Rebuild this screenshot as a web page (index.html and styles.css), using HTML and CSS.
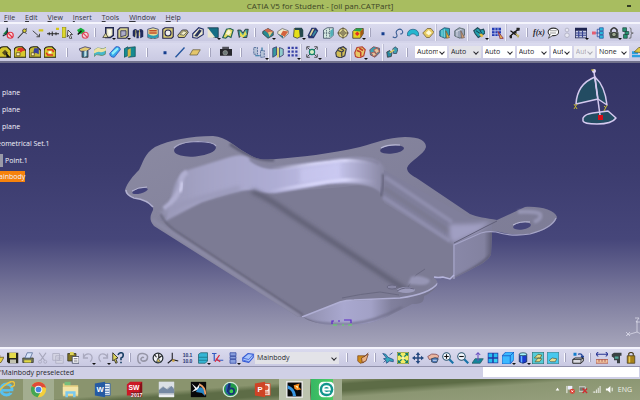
FILE: index.html
```html
<!DOCTYPE html>
<html lang="en">
<head>
<meta charset="utf-8">
<title>CATIA V5 for Student - [oil pan.CATPart]</title>
<link rel="stylesheet" href="styles.css">
</head>
<body>
<svg class="sprite" aria-hidden="true">
  <symbol id="axisno" viewBox="0 0 16 16"><path d="M1 10l6-7 2 6z" fill="#157a3c"/><path d="M7 1v8l-6 3" stroke="#123" fill="none" stroke-width="1.5"/><circle cx="11" cy="11" r="4" fill="#f6d5dc" stroke="#e23446" stroke-width="1.6"/><path d="M8 8l6 6" stroke="#e23446" stroke-width="1.6"/></symbol>
  <symbol id="ptline" viewBox="0 0 16 16"><path d="M1 15L13 2" stroke="#333" stroke-width="1.4"/><path d="M7 5l6 4" stroke="#333"/><circle cx="10" cy="5" r="2.4" fill="#d8ce32" stroke="#333"/></symbol>
  <symbol id="linept" viewBox="0 0 16 16"><path d="M1 5l9 8M6 13h4V9" stroke="#444" fill="none" stroke-width="1.3"/><path d="M9 3h6v3H9z" fill="#d2c51a"/></symbol>
  <symbol id="dist" viewBox="0 0 16 16"><path d="M0 9h16M3 7v4M7 6v6M12 7v4" stroke="#222" stroke-width="1.3"/><path d="M12 1h4v3h-4z" fill="#d2c51a"/></symbol>
  <symbol id="rulecur" viewBox="0 0 16 16"><path d="M0 0h5v14H0z" fill="#ded82c" stroke="#86801a"/><path d="M8 4l6 6H11l2 5-2 1-2-5-2 2z" fill="#eee" stroke="#222"/></symbol>
  <symbol id="greenno" viewBox="0 0 16 16"><path d="M0 4l5-3 5 3v5H3z" fill="#15ae38"/><path d="M1 10l5-5" stroke="#111" stroke-width="2"/><circle cx="11" cy="11" r="4" fill="#f6d5dc" stroke="#dc4c62" stroke-width="1.5"/><path d="M8 8l6 6" stroke="#dc4c62" stroke-width="1.5"/></symbol>
  <symbol id="pad" viewBox="0 0 16 16"><path d="M5 1h10v10l-4 3H5z" fill="#e9e6c6" stroke="#20264e" stroke-width="2"/><path d="M8 4h4v6l-3 2z" fill="#fbfaf0"/><path d="M1 14l4-6 3 6z" fill="#ded89a" stroke="#333"/></symbol>
  <symbol id="pocket" viewBox="0 0 16 16"><path d="M1 4l3-3h11v11l-3 3H1z" fill="#d6d08d" stroke="#25254d" stroke-width="1.5"/><path d="M5 5h7v6l-7 2z" fill="#adadc8" stroke="#25254d"/></symbol>
  <symbol id="shaft" viewBox="0 0 16 16"><path d="M1 5q3-5 7 0q4-5 7 0v8l-4 2V7H9v8H6V7L4 14 1 12z" fill="#222b5c"/><path d="M5 4v9M10 4v8" stroke="#d7c86a"/></symbol>
  <symbol id="groove" viewBox="0 0 16 16"><path d="M1 3q7-4 14 0v11q-7 4-14 0z" fill="#e8d994" stroke="#26376f"/><path d="M3 4h10v2H3zm0 3h10v2H3z" fill="#c34f28"/><path d="M1 9q8 5 14 0v4q-7 4-14 0z" fill="#2a9bb5"/></symbol>
  <symbol id="hole" viewBox="0 0 16 16"><path d="M1 3l3-2h11v12l-2 2H1z" fill="#d8cb74" stroke="#26264f" stroke-width="1.5"/><circle cx="8" cy="8" r="4" fill="#eee" stroke="#282850" stroke-width="1.5"/></symbol>
  <symbol id="rib" viewBox="0 0 16 16"><path d="M1 11L7 4h6l2 3-5 7H2z" fill="#d9cd77" stroke="#2b2b42" stroke-width="1.2"/><path d="M4 10l5-5 4 2-4 4z" fill="#f2edc5" stroke="#555"/></symbol>
  <symbol id="slot" viewBox="0 0 16 16"><path d="M1 9L9 1l6 2v7l-8 5-6-1z" fill="#eeebce" stroke="#222d68" stroke-width="1.5"/><path d="M3 12l7-9 3 2-6 8z" fill="#27345f"/></symbol>
  <symbol id="stiff" viewBox="0 0 16 16"><path d="M1 1h14v13H9z" fill="#156f85" stroke="#173348"/><path d="M1 1v13h10z" fill="#e9e7d0"/></symbol>
  <symbol id="loft" viewBox="0 0 16 16"><path d="M1 14l5-11 5-1 4 2-3 10-4-2-3 3z" fill="#e4da62" stroke="#1f5f51" stroke-width="1.5"/><path d="M5 9l4-6 3 4-3 4z" fill="#f7f5d0"/></symbol>
  <symbol id="loft2" viewBox="0 0 16 16"><path d="M1 4h4l3 4 3-5h4l-2 11H8l-2-4-3 4z" fill="#3f9a99" stroke="#222"/><path d="M4 6l4 5 3-6 2 5-5 4-4-2z" fill="#e6db53"/></symbol>
  <symbol id="fillet" viewBox="0 0 16 16"><path d="M1 6l7-4 7 4v5l-7 4-7-6z" fill="#278b91" stroke="#333"/><path d="M3 4l5-2 7 4-4 5z" fill="#c9674e"/><path d="M8 7l6-1-4 7z" fill="#dccb81"/></symbol>
  <symbol id="chamfer" viewBox="0 0 16 16"><path d="M1 6l6-4 8 3v4l-7 6-7-6z" fill="#efe9ca" stroke="#666"/><path d="M8 5l7 1-5 7-5-3z" fill="#d4623d"/><path d="M1 9l7 3v3z" fill="#2a6e88"/></symbol>
  <symbol id="draft" viewBox="0 0 16 16"><path d="M3 2h7l1 11-4 2-5-2z" fill="#e6df18" stroke="#333"/><path d="M4 1h9l2 3v9l-4 1-1-10H4z" fill="#24474d"/></symbol>
  <symbol id="shell" viewBox="0 0 16 16"><path d="M6 1h6l3 4-6 10H2l-1-4z" fill="#28356e"/><path d="M7 3l3-1-5 10-2-1z" fill="#e2d79b"/><path d="M11 4l2 2-5 7-1-2z" fill="#3b8da4"/></symbol>
  <symbol id="thick" viewBox="0 0 16 16"><path d="M2 4l5-3h8v10l-4 4H2z" fill="#d4e8e0" stroke="#345"/><path d="M6 4v10M10 2v12M2 8h13" stroke="#456" stroke-dasharray="2 1"/><path d="M11 5l4-3v9l-4 3z" fill="#52afb8"/></symbol>
  <symbol id="target" viewBox="0 0 16 16"><circle cx="8" cy="8" r="6" fill="#e5dc96" stroke="#6b6142" stroke-width="1.5"/><circle cx="8" cy="8" r="3" fill="none" stroke="#544d3a"/><path d="M8 0v16M0 8h16" stroke="#5b5340"/></symbol>
  <symbol id="cube3" viewBox="0 0 16 16"><path d="M1 6l4-4h10v7l-4 6H1z" fill="#e4cf21" stroke="#333"/><path d="M2 5l4-3h8l-3 4z" fill="#22a650"/><path d="M11 6l4-4v7l-4 5z" fill="#a35913"/><path d="M4 9l3-3 3 3-3 3z" fill="#e12f24"/></symbol>
  <symbol id="dot" viewBox="0 0 16 16"><path d="M6 7h4v4H6z" fill="#153e8e"/></symbol>
  <symbol id="spline" viewBox="0 0 16 16"><path d="M1 13c4 3 7 0 5-4s4-8 7-5 0 6-2 5" stroke="#355a91" fill="none" stroke-width="1.4"/></symbol>
  <symbol id="arc" viewBox="0 0 16 16"><path d="M0 11Q1 3 8 3t8 8l-3 1q-5-6-10 0z" fill="#26b6cf" stroke="#266487"/></symbol>
  <symbol id="offset" viewBox="0 0 16 16"><path d="M1 8l6-6h5l4 5-6 7H6z" fill="#e6ca62" stroke="#6d5c34"/><path d="M5 8l4-4 4 4-4 3z" fill="#fffad5"/></symbol>
  <symbol id="split" viewBox="0 0 16 16"><path d="M1 5l6-4 7 1v9l-6 4-7-3z" fill="#2aa8ba" stroke="#246"/><path d="M4 4v9M7 3v11" stroke="#b9edf0"/><path d="M9 5l5 9-4 1z" fill="#e3b944" stroke="#7a5c3a"/></symbol>
  <symbol id="trim" viewBox="0 0 16 16"><path d="M1 5l6-4 7 2v8l-6 4-7-3z" fill="#9aa5b8" stroke="#455"/><path d="M4 5v8M3 6l7-3" stroke="#e4e8f1"/><path d="M9 5l5 9-4 1z" fill="#cc9c73" stroke="#756058"/></symbol>
  <symbol id="xform" viewBox="0 0 16 16"><path d="M1 5l5-4 4 3 4-1 2 5-4 3-5 3-4-5z" fill="#239ead" stroke="#204a57" stroke-width="1.5"/><path d="M4 5l6 4M9 4l3 5" stroke="#123"/><path d="M8 9l3 5 3-2-2-3z" fill="#e6ba42"/></symbol>
  <symbol id="gridcur" viewBox="0 0 16 16"><path d="M0 1h12v11H0z" fill="#253cb4"/><path d="M0 5h12M0 9h12M4 1v11M8 1v11" stroke="#cad0ef"/><path d="M8 6l7 9-4 1z" fill="#e7b34c" stroke="#824"/></symbol>
  <symbol id="axes" viewBox="0 0 16 16"><path d="M1 13l6-6 7-5M2 5l11 8" stroke="#111" stroke-width="1.500"/><path d="M6 6h4v4H6zM10 1h4v4h-4zM1 11h3v4H1z" fill="#222"/><path d="M8 8l4 7 2-4z" fill="#c9b96d"/></symbol>
  <symbol id="bubble" viewBox="0 0 16 16"><ellipse cx="8.500" cy="6.500" rx="7" ry="5" fill="#fff" stroke="#333" stroke-width="1.4"/><path d="M4 10l-2 5 6-4" fill="#fff" stroke="#333"/><path d="M4 5h9M4 8h8" stroke="#777"/></symbol>
  <symbol id="ghost" viewBox="0 0 16 16"><circle cx="8" cy="4" r="2.500" fill="#e7e7f2" stroke="#aaaabe"/><circle cx="8" cy="11" r="3" fill="#e7e7f2" stroke="#aaaabe"/></symbol>
  <symbol id="table" viewBox="0 0 16 16"><path d="M0 1h16v14H0z" fill="#1e2450"/><path d="M1 5h14v9H1z" fill="#c9cde2"/><path d="M1 8h14M1 11h14M5 5v9M10 5v9" stroke="#34408f" stroke-width="1.500"/></symbol>
  <symbol id="tree" viewBox="0 0 16 16"><path d="M2 8h5M7 3v10M7 3h4M7 8h4M7 13h4" stroke="#27459b" fill="none"/><path d="M0 6h5v4H0z" fill="#e65d70"/><path d="M10 1h5v4h-5zM10 6h5v4h-5zM10 11h5v4h-5z" fill="#29b9dc" stroke="#2859a0"/></symbol>
  <symbol id="lock" viewBox="0 0 16 16"><path d="M4 7V4q4-6 8 0v3" stroke="#333" fill="none" stroke-width="2"/><path d="M1 7h13v8H3z" fill="#465047"/><circle cx="8" cy="10" r="3" fill="#98a58b" stroke="#222"/></symbol>
  <symbol id="rules" viewBox="0 0 16 16"><path d="M1 1h5v5H1zM4 6h5v4H4zM2 10h5v5H2z" fill="#249270" stroke="#244b44"/><path d="M10 1q3 0 2 4t3 3q-4 0-3 4t-3 3" stroke="#555" fill="none"/></symbol>
  <symbol id="gold" viewBox="0 0 16 16"><path d="M0 15V6q1-5 6-5h5l5 5v9z" fill="#d4c62e" stroke="#201f12" stroke-width="1.600"/><path d="M4 9l4-4 4 4-4 4z" fill="#574d1d"/><path d="M9 8l6 7h-5z" fill="#111"/></symbol>
  <symbol id="goldr" viewBox="0 0 16 16"><path d="M0 15V6q1-5 6-5h5l5 5v9z" fill="#d7c82e" stroke="#201f12" stroke-width="1.600"/><path d="M5 3l6-1 4 4-4 1-2 2-2-3-3 1z" fill="#df3427"/><path d="M3 9h5v4H3z" fill="#fff0b7" stroke="#554c1b"/></symbol>
  <symbol id="goldb" viewBox="0 0 16 16"><path d="M0 15V6q1-5 6-5h5l5 5v9z" fill="#c5b936" stroke="#201f12" stroke-width="1.600"/><path d="M7 3h6v8l-4-2-4 3z" fill="#373f9b"/><path d="M3 9h4v4H3z" fill="#fff0b7" stroke="#554c1b"/></symbol>
  <symbol id="goldx" viewBox="0 0 16 16"><path d="M0 15V6q1-5 6-5h5l5 5v9z" fill="#d7c82e" stroke="#201f12" stroke-width="1.600"/><path d="M4 5h7l2 3M12 12H5l-2-3" stroke="#df3427" stroke-width="2" fill="none"/><path d="M6 7h4v3H6z" fill="#fff"/></symbol>
  <symbol id="extr" viewBox="0 0 16 16"><path d="M4 6h8v9H4z" fill="#3a7190" stroke="#333"/><path d="M0 4l8-3 8 2-6 4H2z" fill="#e5cc71" stroke="#336"/><path d="M7 7l3-1v7l-3 2z" fill="#c3e3e7"/></symbol>
  <symbol id="surf" viewBox="0 0 16 16"><path d="M0 6q4-5 8-3t8-1l-1 9q-4 3-8 1t-7 2z" fill="#47b8cb" stroke="#63835b"/><path d="M0 6q4-5 8-3t8-1v4q-5 3-8 2t-8 2z" fill="#eee2a1"/></symbol>
  <symbol id="sweep" viewBox="0 0 16 16"><path d="M1 10L9 1q6-1 6 4l-8 10q-6 0-6-5z" fill="#36a8ea" stroke="#2145ba"/><path d="M3 9l8-7 2 2-8 8z" fill="#8ff0fa"/></symbol>
  <symbol id="close" viewBox="0 0 16 16"><path d="M0 4l5-3v12l-5 2zM6 2l9-1v13l-9 1z" fill="#168b91" stroke="#174f57"/><path d="M5 5l4-2v10l-4 2z" fill="#d3b849"/></symbol>
  <symbol id="line" viewBox="0 0 16 16"><path d="M2 15L14 2" stroke="#23559d" stroke-width="1.800"/></symbol>
  <symbol id="plane" viewBox="0 0 16 16"><path d="M5 5h10l-4 7H1z" fill="#e4c66a" stroke="#675d42"/></symbol>
  <symbol id="cam" viewBox="0 0 16 16"><path d="M0 4h16v9H0z" fill="#26272c"/><path d="M3 1h9v3H3z" fill="#515159"/><circle cx="7" cy="9" r="3" fill="#6d7a78" stroke="#999"/></symbol>
  <symbol id="transl" viewBox="0 0 16 16"><path d="M1 2h5v9H1zM10 6h5v9h-5z" fill="#b7c4d8" stroke="#405c8d" stroke-dasharray="3 1"/><path d="M3 13h6M12 2v4" stroke="#236f9d" stroke-width="1.500"/></symbol>
  <symbol id="mirror" viewBox="0 0 16 16"><path d="M1 3l5-2v11l-5 3z" fill="#3897a1" stroke="#336"/><path d="M7 2l2 1v11l-2 2z" fill="#e6d54b"/><path d="M10 2l5 2v8l-5 3z" fill="#8fcbcb" stroke="#336"/></symbol>
  <symbol id="dots" viewBox="0 0 16 16"><path d="M1 1h3v3H1zM6 1h3v3H6zM11 1h3v3h-3zM1 6h3v3H1zM6 6h3v3H6zM11 6h3v3h-3zM1 11h3v3H1zM6 11h3v3H6zM11 11h3v3h-3z" fill="#3740a6"/></symbol>
  <symbol id="scale" viewBox="0 0 16 16"><path d="M2 2l12 12M14 2L2 14" stroke="#222"/><path d="M1 5V1h4M11 1h4v4M15 11v4h-4M5 15H1v-4" stroke="#222" fill="none"/><circle cx="8" cy="8" r="3.500" fill="#d5edc4" stroke="#138268" stroke-width="1.500"/></symbol>
  <symbol id="boxes" viewBox="0 0 16 16"><path d="M1 9l4-6 6-2 4 3-2 9-6 3-5-2z" fill="#d1bd55" stroke="#34384b" stroke-width="1.500"/><path d="M4 6l5 2M9 8v6M7 3l5 3M12 6l-3 2" stroke="#34384b" stroke-width="1.500"/></symbol>
  <symbol id="boxesr" viewBox="0 0 16 16"><path d="M1 9l3-7 7-1 4 4-2 8-6 3-5-2z" fill="#e8c766" stroke="#b43d30" stroke-width="1.500"/><path d="M4 6l5 2M9 8v6M7 3l5 3" stroke="#c23b2d" stroke-width="2"/></symbol>
  <symbol id="boxesc" viewBox="0 0 16 16"><path d="M1 5l5-4 8 2v6l-6 6-6-3z" fill="#37a3b7" stroke="#873b42"/><path d="M6 5l5-2 3 4-4 3zM3 9l3 5 4-2-3-4z" fill="#e1c3a0" stroke="#b6463e"/></symbol>
  <symbol id="assem" viewBox="0 0 16 16"><path d="M1 8l4-2 3 3-1 5-5 1z" fill="#2889a3" stroke="#333"/><path d="M9 4l3-3 4 3-2 6h-4z" fill="#3e9fb5" stroke="#345"/><path d="M5 9l6-4" stroke="#e4cd58" stroke-width="2"/></symbol>
  <symbol id="paint" viewBox="0 0 16 16"><path d="M0 7h8v4H0zM0 12h16v3H0z" fill="#2aa0e0"/><path d="M3 8l6-6h7v7z" fill="#e0c843" stroke="#645824"/></symbol>
  <symbol id="save" viewBox="0 0 16 16"><path d="M0 1h15v14H2l-2-2z" fill="#25251a"/><path d="M3 1h9v7H3z" fill="#e4db4b"/><path d="M4 10h8v5H4z" fill="#c2c2b0"/></symbol>
  <symbol id="open" viewBox="0 0 16 16"><path d="M1 4h10v9H1z" fill="#947e27"/><path d="M4 7h12l-4 7H1z" fill="#e7cf45" stroke="#625423"/></symbol>
  <symbol id="print" viewBox="0 0 16 16"><path d="M1 8h14v6H1z" fill="#777957" stroke="#33362b"/><path d="M4 8l3-7h7l-3 7z" fill="#d9e5fb" stroke="#4d6592"/><path d="M3 11h9v3H3z" fill="#e1d943"/></symbol>
  <symbol id="cut" viewBox="0 0 16 16"><path d="M3 1l7 10M12 1L5 11" stroke="#a7a7bb" stroke-width="1.600"/><circle cx="4" cy="13" r="2" fill="none" stroke="#a7a7bb"/><circle cx="11" cy="13" r="2" fill="none" stroke="#a7a7bb"/></symbol>
  <symbol id="copy" viewBox="0 0 16 16"><path d="M1 2h9v9H1zM5 5h10v10H5z" fill="#d4d4e3" stroke="#aaaabd"/><path d="M7 8h6M7 11h6" stroke="#aaaabd"/></symbol>
  <symbol id="paste" viewBox="0 0 16 16"><path d="M1 2h11v10H1z" fill="#807426" stroke="#343321"/><path d="M4 0h5v4H4z" fill="#ded55a"/><path d="M7 6h9v9H7z" fill="#fff" stroke="#343b55"/><path d="M9 9h5M9 12h5" stroke="#445"/></symbol>
  <symbol id="undo" viewBox="0 0 16 16"><path d="M2 7q3-6 9-4 5 4 0 10M2 2v6h6" stroke="#a9a9be" fill="none" stroke-width="1.700"/></symbol>
  <symbol id="redo" viewBox="0 0 16 16"><path d="M14 7q-3-6-9-4-5 4 0 10M14 2v6H8" stroke="#a9a9be" fill="none" stroke-width="1.700"/></symbol>
  <symbol id="help" viewBox="0 0 16 16"><path d="M1 1l7 7-3 1 2 5-2 1-2-5-2 2z" fill="#ded55e" stroke="#111"/><path d="M8 4q1-3 4-3t3 3-3 4v3M12 13v2" stroke="#1d4267" fill="none" stroke-width="2.200"/></symbol>
  <symbol id="update" viewBox="0 0 16 16"><path d="M9 8q-1-2-3 0t1 4q6 1 7-4t-6-6-7 6 4 7" stroke="#9696a7" fill="none" stroke-width="2"/></symbol>
  <symbol id="clock" viewBox="0 0 16 16"><circle cx="8" cy="8" r="6.500" fill="#f1f1f4" stroke="#222a30" stroke-width="1.600"/><path d="M3 3l3 4M9 2v6l4-3" stroke="#222" fill="none" stroke-width="1.500"/><path d="M8 8l4 6-6-1z" fill="#e2c65a" stroke="#345"/></symbol>
  <symbol id="axis3" viewBox="0 0 16 16"><path d="M7 1v9l8 2M7 10l-6 5" stroke="#1b1b20" fill="none" stroke-width="1.400"/><path d="M7 10h3v3H7z" fill="#d2a43a"/></symbol>
  <symbol id="slab" viewBox="0 0 16 16"><path d="M2 3l3-2h9v11l-3 3H2z" fill="#34b5d5" stroke="#24606b"/><path d="M2 7h12M2 11h12" stroke="#177080"/></symbol>
  <symbol id="link" viewBox="0 0 16 16"><path d="M0 2h6M3 2v10M6 11h9" stroke="#345ac0" stroke-width="1.600"/><path d="M4 13l6-9M5 9l6 4" stroke="#dc273d" stroke-width="1.700"/></symbol>
  <symbol id="stack" viewBox="0 0 16 16"><path d="M4 1h8v4H4zM4 6h8v3H4zM4 10h8v5H4z" fill="#8aa0df" stroke="#3048a0"/></symbol>
  <symbol id="body" viewBox="0 0 16 16"><path d="M1 8l7-6 7 1v4l-6 7-8-2z" fill="#a8c4fa" stroke="#3157d3" stroke-width="1.400"/><path d="M1 8l8 2 6-7M2 11l7 2" stroke="#3157d3" fill="none"/></symbol>
  <symbol id="hand" viewBox="0 0 16 16"><path d="M1 5h9l-1 9-5 1-3-3z" fill="#cf8b17" stroke="#7e4a20"/><path d="M15 1L9 7M6 8l5-3 4-2-3 9-5 2z" stroke="#733c1f" fill="#e9b184"/></symbol>
  <symbol id="fly" viewBox="0 0 16 16"><path d="M1 2l4 1 3 4 7 3v3l-5-1-4 3-1-4-3-2 4-1z" fill="#33aabd" stroke="#264a86"/><path d="M10 4l4-3M2 14l3-3" stroke="#264a86"/></symbol>
  <symbol id="fit" viewBox="0 0 16 16"><path d="M0 0h16v16H0z" fill="#f4ed63" stroke="#28484a"/><path d="M2 2l12 12M14 2L2 14M2 5V2h3M11 2h3v3M14 11v3h-3M5 14H2v-3" stroke="#137e6a" fill="none" stroke-width="1.500"/><path d="M6 6h4v4H6z" fill="#f9f4a5"/></symbol>
  <symbol id="pan" viewBox="0 0 16 16"><path d="M8 0l3 4H9v3h3V5l4 3-4 3V9H9v3h2l-3 4-3-4h2V9H4v2L0 8l4-3v2h3V4H5z" fill="#24477d"/></symbol>
  <symbol id="rotate" viewBox="0 0 16 16"><path d="M1 6q5-5 11-3t2 5l-6 1-5 1z" fill="#eab6a0" stroke="#7d444c"/><path d="M6 9q5-3 9 0l-2 5q-4 1-7-1z" fill="#4c78b8" stroke="#345"/><path d="M8 11h5" stroke="#fff"/></symbol>
  <symbol id="zin" viewBox="0 0 16 16"><path d="M9 9l6 6" stroke="#1873a8" stroke-width="3"/><circle cx="6" cy="6" r="5" fill="#f5f9ff" stroke="#27526d" stroke-width="1.400"/><path d="M3 6h6M6 3v6" stroke="#111" stroke-width="1.500"/></symbol>
  <symbol id="zout" viewBox="0 0 16 16"><path d="M9 9l6 6" stroke="#1873a8" stroke-width="3"/><circle cx="6" cy="6" r="5" fill="#f5f9ff" stroke="#27526d" stroke-width="1.400"/><path d="M3 6h6" stroke="#111" stroke-width="1.500"/></symbol>
  <symbol id="normal" viewBox="0 0 16 16"><path d="M4 9h11l-4 6H0z" fill="#14859b" stroke="#245d65"/><path d="M8 12V1M5 4l3-3 3 3" stroke="#6a50c0" fill="none" stroke-width="1.400"/></symbol>
  <symbol id="multi" viewBox="0 0 16 16"><path d="M1 1h14v14H1z" fill="#2337a5"/><path d="M2 2h5v5H2zM9 2h5v5H9zM2 9h5v5H2z" fill="#27bdef"/><path d="M9 9h5v5H9z" fill="#37d1f2"/></symbol>
  <symbol id="iso" viewBox="0 0 16 16"><path d="M0 5l5-5h11v10l-5 6H0z" fill="#3cb9ff" stroke="#164dbc"/><path d="M0 5h11v10M11 5l5-5" stroke="#164dbc" fill="none"/></symbol>
  <symbol id="cyl" viewBox="0 0 16 16"><path d="M3 3v10q5 4 10 0V3z" fill="#1b3bd0" stroke="#132c50"/><path d="M5 5h2v9H5z" fill="#67b7ff"/><ellipse cx="8" cy="3" rx="5" ry="2" fill="#a6f0f9" stroke="#1c4655"/></symbol>
  <symbol id="hide" viewBox="0 0 16 16"><path d="M0 0h16v16H0z" fill="#55cbd7" stroke="#35686c" stroke-width="1.500"/><path d="M3 8l5-5 5 1-2 4zM4 13l4-5 5 1-3 4z" fill="#e4dc86" stroke="#59603c"/></symbol>
  <symbol id="swap" viewBox="0 0 16 16"><path d="M0 0h16v16H0z" fill="#48c8ed" stroke="#4f7980" stroke-width="1.500"/><path d="M3 11l4-3 6 1-2 4H5z" fill="#e8dc8f" stroke="#4d6158"/></symbol>
  <symbol id="tool" viewBox="0 0 16 16"><path d="M2 1h4v4H2z" fill="#137ccc"/><path d="M8 3q6-2 6 4M12 5l2 3 2-3" stroke="#183e95" fill="none" stroke-width="1.400"/><path d="M1 10l3-2h11v4l-3 3H1z" fill="#dadae0" stroke="#222" stroke-width="1.300"/><path d="M1 10h11l3-2M12 10v5" stroke="#222" fill="none"/></symbol>
  <symbol id="measure" viewBox="0 0 16 16"><path d="M0 3h16M3 0L0 3l3 3M13 0l3 3-3 3" stroke="#293594" fill="none" stroke-width="1.400"/><path d="M0 10h16v5H0z" fill="#efc4a0" stroke="#ac5447"/><path d="M4 10v3M8 10v3M12 10v3" stroke="#933"/></symbol>
  <symbol id="caliper" viewBox="0 0 16 16"><path d="M1 3l3-2h10v4h-2v10H8v-4H4V8L1 6z" fill="#3a4143"/><path d="M5 6h5v3H5z" fill="#4fa698"/></symbol>
  <symbol id="weight" viewBox="0 0 16 16"><path d="M3 5h10v10H3z" fill="#a9831a" stroke="#493e1d"/><path d="M5 5V2q3-3 6 0v3" stroke="#493e1d" fill="none" stroke-width="1.500"/><path d="M5 6h2v8H5z" fill="#e4ca54"/></symbol>
</svg>

<header class="titlebar">
  <h1 class="title">CATIA V5 for Student - [oil pan.CATPart]</h1>
  <button class="minimize" aria-label="Minimize"></button>
</header>

<nav class="menubar">
  <a href="#"><u>F</u>ile</a><a href="#"><u>E</u>dit</a><a href="#"><u>V</u>iew</a><a href="#"><u>I</u>nsert</a><a href="#"><u>T</u>ools</a><a href="#"><u>W</u>indow</a><a href="#"><u>H</u>elp</a>
</nav>

<div class="toolbars">
  <div class="bar">
    <button aria-label="Axis off"><svg><use href="#axisno"/></svg></button>
    <button aria-label="Point on line"><svg><use href="#ptline"/></svg></button>
    <button aria-label="Line to point"><svg><use href="#linept"/></svg></button>
    <button aria-label="Distance"><svg><use href="#dist"/></svg></button>
    <button aria-label="Select ruler"><svg><use href="#rulecur"/></svg></button>
    <button aria-label="Solid off"><svg><use href="#greenno"/></svg></button>
    <i class="sep"></i>
    <button class="drop" aria-label="Pad"><svg><use href="#pad"/></svg></button>
    <button class="drop" aria-label="Pocket"><svg><use href="#pocket"/></svg></button>
    <button aria-label="Shaft"><svg><use href="#shaft"/></svg></button>
    <button aria-label="Groove"><svg><use href="#groove"/></svg></button>
    <button aria-label="Hole"><svg><use href="#hole"/></svg></button>
    <button aria-label="Rib"><svg><use href="#rib"/></svg></button>
    <button aria-label="Slot"><svg><use href="#slot"/></svg></button>
    <button class="drop" aria-label="Stiffener"><svg><use href="#stiff"/></svg></button>
    <button aria-label="Loft"><svg><use href="#loft"/></svg></button>
    <button aria-label="Removed loft"><svg><use href="#loft2"/></svg></button>
    <i class="sep"></i>
    <button class="drop" aria-label="Fillet"><svg><use href="#fillet"/></svg></button>
    <button aria-label="Chamfer"><svg><use href="#chamfer"/></svg></button>
    <button class="drop" aria-label="Draft"><svg><use href="#draft"/></svg></button>
    <button aria-label="Shell"><svg><use href="#shell"/></svg></button>
    <button aria-label="Thickness"><svg><use href="#thick"/></svg></button>
    <button aria-label="Thread"><svg><use href="#target"/></svg></button>
    <button class="drop" aria-label="Remove face"><svg><use href="#cube3"/></svg></button>
    <i class="sep"></i>
    <button aria-label="Point"><svg><use href="#dot"/></svg></button>
    <button aria-label="Spline"><svg><use href="#spline"/></svg></button>
    <button aria-label="Arc"><svg><use href="#arc"/></svg></button>
    <button aria-label="Offset"><svg><use href="#offset"/></svg></button>
    <i class="rule"></i>
    <button aria-label="Split"><svg><use href="#split"/></svg></button>
    <button aria-label="Trim"><svg><use href="#trim"/></svg></button>
    <i class="rule"></i>
    <button class="drop wide" aria-label="Transform"><svg><use href="#xform"/></svg></button>
    <i class="rule"></i>
    <button aria-label="Work on support"><svg><use href="#gridcur"/></svg></button>
    <i class="rule"></i>
    <button aria-label="Axis system"><svg><use href="#axes"/></svg></button>
    <i class="sep"></i>
    <button class="tight formula">f(x)</button>
    <button class="tight" aria-label="Comment"><svg><use href="#bubble"/></svg></button>
    <button class="tight" aria-label="Link" disabled><svg><use href="#ghost"/></svg></button>
    <button class="tight drop" aria-label="Design table"><svg><use href="#table"/></svg></button>
    <button class="wide" aria-label="Relations"><svg><use href="#tree"/></svg></button>
    <button class="tight drop" aria-label="Lock"><svg><use href="#lock"/></svg></button>
    <button class="tight" aria-label="Rules"><svg><use href="#rules"/></svg></button>
  </div>
  <div class="bar second">
    <button aria-label="Part"><svg><use href="#gold"/></svg></button>
    <button aria-label="Part update"><svg><use href="#goldr"/></svg></button>
    <button aria-label="Part select"><svg><use href="#goldb"/></svg></button>
    <button aria-label="Part exchange"><svg><use href="#goldx"/></svg></button>
    <i class="sep lg"></i>
    <button aria-label="Extrude"><svg><use href="#extr"/></svg></button>
    <button aria-label="Surface"><svg><use href="#surf"/></svg></button>
    <button aria-label="Sweep"><svg><use href="#sweep"/></svg></button>
    <button aria-label="Close surface"><svg><use href="#close"/></svg></button>
    <i class="sep lg"></i>
    <button aria-label="Point"><svg><use href="#dot"/></svg></button>
    <button aria-label="Line"><svg><use href="#line"/></svg></button>
    <button aria-label="Plane"><svg><use href="#plane"/></svg></button>
    <i class="sep md"></i>
    <button aria-label="Capture"><svg><use href="#cam"/></svg></button>
    <i class="sep md"></i>
    <button class="drop wide" aria-label="Translate"><svg><use href="#transl"/></svg></button>
    <i class="rule"></i>
    <button aria-label="Mirror"><svg><use href="#mirror"/></svg></button>
    <button class="drop" aria-label="Pattern"><svg><use href="#dots"/></svg></button>
    <i class="rule"></i>
    <button class="drop wide" aria-label="Scale"><svg><use href="#scale"/></svg></button>
    <i class="sep"></i>
    <button class="wide" aria-label="Assemble"><svg><use href="#boxes"/></svg></button>
    <i class="rule"></i>
    <button class="drop" aria-label="Add body"><svg><use href="#boxesr"/></svg></button>
    <button aria-label="Union trim"><svg><use href="#boxesc"/></svg></button>
    <i class="rule"></i>
    <button aria-label="Insert body"><svg><use href="#assem"/></svg></button>
    <i class="sep md"></i>
    <div class="props">
      <label class="pick"><select aria-label="Fill color"><option>Automatic</option></select></label>
      <label class="pick grey"><select aria-label="Opacity"><option>Auto</option></select></label>
      <label class="pick"><select aria-label="Line weight"><option>Auto</option></select></label>
      <label class="pick"><select aria-label="Line type"><option>Auto</option></select></label>
      <label class="pick short"><select aria-label="Point symbol"><option>Auto</option></select></label>
      <label class="pick short off"><select aria-label="Render style" disabled><option>Auto</option></select></label>
      <label class="pick"><select aria-label="Layer"><option>None</option></select></label>
      <button aria-label="Painter"><svg><use href="#paint"/></svg></button>
    </div>
  </div>
</div>

<main class="viewport">
  <svg class="scene" viewBox="0 63 640 284" preserveAspectRatio="xMidYMid slice" role="img" aria-label="Oil pan model">
    <defs>
      <linearGradient id="wall" gradientUnits="userSpaceOnUse" x1="165" y1="0" x2="386" y2="0"><stop offset="0" stop-color="#9a99b8"/><stop offset=".2" stop-color="#a5a4c6"/><stop offset=".5" stop-color="#aeadd4"/><stop offset=".78" stop-color="#c6c5ed"/><stop offset=".88" stop-color="#a9a8cb"/><stop offset="1" stop-color="#85849f"/></linearGradient>
      <linearGradient id="shine" gradientUnits="userSpaceOnUse" x1="270" y1="0" x2="378" y2="0"><stop offset="0" stop-color="#e2e1ff" stop-opacity="0"/><stop offset=".4" stop-color="#dddcfc"/><stop offset=".7" stop-color="#dddcfc"/><stop offset="1" stop-color="#a09fc0" stop-opacity="0"/></linearGradient>
      <linearGradient id="cyl1" x1="0" y1="0" x2="1" y2="0"><stop offset="0" stop-color="#8f8eac"/><stop offset=".3" stop-color="#a9a8cf"/><stop offset=".5" stop-color="#a2a1c6"/><stop offset=".65" stop-color="#81809d"/><stop offset="1" stop-color="#6d6c85"/></linearGradient>
      <linearGradient id="flange" x1="0" y1="0" x2="1" y2="1"><stop offset="0" stop-color="#8b8aa2"/><stop offset=".5" stop-color="#807f99"/><stop offset="1" stop-color="#7c7b94"/></linearGradient>
      <linearGradient id="box" x1="0" y1="0" x2="1" y2="0"><stop offset="0" stop-color="#8988a8"/><stop offset=".8" stop-color="#8382a0"/><stop offset="1" stop-color="#5e5d76"/></linearGradient>
      <filter id="s1" x="-20%" y="-50%" width="140%" height="200%"><feGaussianBlur stdDeviation="1"/></filter>
      <filter id="s2" x="-20%" y="-50%" width="140%" height="200%"><feGaussianBlur stdDeviation="2"/></filter>
      <clipPath id="part"><path id="outline" d="M125 190C127 183 133 176 139 170C143 163 144 154 155 147C170 140 190 136 213 136C227 137 235 147 248 154C258 160 263 160 276 159C300 157 330 154 360 147C378 142 386 138 405 137C420 137 426 141 426 147C424 155 409 161 407 168C407 173 413 176 418 179L470 214C477 217 486 218 497 220L525 207C540 206 555 210 557 217C555 226 540 234 520 235C505 235 499 230 492 232L491 254C489 260 482 264 470 270L452 279L433 277C441 282 438 289 424 296C424 302 422 304 412 304L392 314C378 323 360 325 345 325C325 326 309 322 303 317L298 317L154 226C149 220 150 216 153 210C154 203 147 201 140 199C132 197 126 195 125 190Z"/></clipPath>
    </defs>
    <use href="#outline" fill="url(#flange)"/>
    <g clip-path="url(#part)">
      <path d="M164 222Q166 214 179 209L240 191Q256 188 268 193L345 187Q373 181 382 195L384 203L453 245V280L433 277L420 300L345 301L302 317L174 233Z" fill="#7c7b94"/>
      <path d="M164 222C172 207 171 174 188 170L230 157Q243 153 249 158C260 168 267 168 278 168L325 161Q356 155 373 159Q389 165 384 178L383 195C375 183 350 182 328 184L277 193Q261 194 251 190Q235 190 202 202Z" fill="url(#wall)" filter="url(#s1)"/>
      <path d="M250 159C260 167 270 168 280 167L325 161Q355 155 379 163" fill="none" stroke="#8584a0" stroke-width="3" filter="url(#s1)"/>
      <path d="M272 169L330 162Q352 158 376 163" fill="none" stroke="url(#shine)" stroke-width="3" filter="url(#s1)"/>
      <path d="M270 191L330 181Q354 178 376 182" fill="none" stroke="url(#shine)" stroke-width="3" filter="url(#s1)"/>
      <path d="M300 168L340 163V179L300 184Z" fill="#cdccf4" opacity=".6" filter="url(#s2)"/>
      <path d="M187 172Q180 176 181 185Q178 198 164 209" fill="none" stroke="#b0afd0" stroke-width="5" filter="url(#s1)"/>
      <path d="M182 182Q182 188 180 192" fill="none" stroke="#dad9f7" stroke-width="2" filter="url(#s1)"/>
      <path d="M162 215Q172 206 202 198L240 188" fill="none" stroke="#9998b8" stroke-width="4" filter="url(#s2)"/>
      <path d="M384 170L470 218L492 222V232L454 241L384 199Z" fill="#807f9b"/>
      <path d="M385 177L452 222M383 197L450 241" fill="none" stroke="#8f8ead" stroke-width="4" filter="url(#s1)"/>
      <path d="M384 188L450 232" fill="none" stroke="#7b7a93" stroke-width="5" filter="url(#s1)"/>
      <path d="M383 174Q384 184 381 196" fill="none" stroke="#5e5d77" stroke-width="2" filter="url(#s1)"/>
      <path d="M450 224Q470 225 490 222L478 232L453 243Q448 238 450 224Z" fill="#a09fc2" filter="url(#s2)"/>
      <path d="M453 244L480 233L492 231V254Q484 264 453 279Z" fill="url(#box)"/>
      <path d="M454 279Q480 266 491 255" fill="none" stroke="#62617a" stroke-width="3" filter="url(#s1)"/>
      <path d="M252 191Q270 199 289 213L406 290" fill="none" stroke="#5f5e73" stroke-width="5" filter="url(#s2)"/>
      <path d="M161 214Q162 221 177 232L303 315" fill="none" stroke="#5e5d72" stroke-width="1.500" filter="url(#s1)"/>
      <path d="M152 220L300 317" fill="none" stroke="#8b8aa5" stroke-width="4" filter="url(#s1)"/>
      <path d="M230 144Q240 151 248 154Q258 160 274 160" fill="none" stroke="#5c5b75" stroke-width="3" filter="url(#s1)"/>
      <path d="M303 317L342 301L400 299Q420 297 439 284L424 303L390 316Q370 328 325 326Z" fill="url(#cyl1)"/>
      <path d="M303 318Q315 325 350 324Q375 322 402 307" fill="none" stroke="#6d6c86" stroke-width="2" filter="url(#s1)"/>
      <path d="M302 317L340 302Q346 300 354 300L400 298Q430 294 438 283" fill="none" stroke="#b0afd4" stroke-width="1.500"/>
      <path d="M342 298Q360 294 380 292L399 295M408 287L416 275L425 269" fill="none" stroke="#65647c" stroke-width=".8"/>
      <path d="M411 277Q420 274 430 280Q430 285 421 285L408 284Z" fill="#9796b5" filter="url(#s1)"/>
    </g>
    <path d="M454 279V245L481 233Q488 231 496 232Q512 237 530 234Q552 228 556 218" fill="none" stroke="#a5a4c7" stroke-width="1.200"/>
    <path d="M434 277Q438 278 443 277L450 279L454 275" fill="none" stroke="#b5b4dc" stroke-width="1.500"/>
    <path d="M454 243L485 227L497 221" fill="none" stroke="#605f79" stroke-width="1"/>
    <path d="M518 212Q536 211 540 214Q542 219 534 222" fill="none" stroke="#9695b4" stroke-width="4" filter="url(#s1)"/>
    <path d="M126 190Q126 195 134 198Q148 200 153 207" fill="none" stroke="#b1b0cf" stroke-width="1.500"/>
    <ellipse cx="195" cy="149" rx="21" ry="7.500" transform="rotate(-5 195 149)" fill="#3d3d70"/>
    <path d="M174 148Q179 142 198 141.500Q214 142 216 146" fill="none" stroke="#aaa9c8" stroke-width="1.200"/>
    <ellipse cx="140" cy="191" rx="8" ry="2.500" transform="rotate(-14 140 191)" fill="#41417a"/>
    <path d="M132 191Q138 187 147 187" fill="none" stroke="#b6b5d4"/>
    <ellipse cx="392" cy="149.500" rx="12" ry="4" transform="rotate(-6 392 149)" fill="#3d3d70"/>
    <path d="M381 148Q388 144 400 145" fill="none" stroke="#b9b8d6" stroke-width="1.200"/>
    <ellipse cx="522" cy="226" rx="9" ry="3.500" transform="rotate(-8 522 226)" fill="#45457a"/>
    <path d="M513 225Q520 221 530 222" fill="none" stroke="#bebddb"/>
    <ellipse cx="406" cy="290" rx="9" ry="3" fill="#9c9bbb"/><path d="M397 291Q405 286 414 289" fill="none" stroke="#65647e"/>
    <ellipse cx="392" cy="287" rx="5" ry="2" fill="#8887a4" stroke="#696882"/>
    <path d="M332 324V321H334M338 321H340M344 320H351V323" fill="none" stroke="#5a25c8" stroke-width="1.200"/><path d="M333 325H337M342 325H344M348 325H352" stroke="#5be05a" stroke-width="1.200"/>
    <g fill="#234c62" stroke="#d5c9ef" stroke-width="1.500" stroke-linejoin="round"><path d="M576 104Q577 84 595 77L598 99Z"/><path d="M595 77Q605 86 607 105L598 99Z"/><path d="M583 118Q585 114 593 113L608 111L616 118Q612 124 597 124Q584 124 583 121Z"/><path d="M594 72L600 115"/></g>
    <circle cx="594" cy="71" r="2" fill="#e0d3f5"/><path d="M598 115h5v5h-5z" fill="#d80d18"/>
    <path d="M574 104l3 5M577 104l-3 5M604 106l2 2M607 105l-3 6M591 70h3" stroke="#c5b830" fill="none"/>
    <path d="M637 321V332L627 335M637 332L641 334M635 318h4l-3 4h4M626 332l4 4M630 332l-4 4" fill="none" stroke="#d9d9e8" stroke-width=".8"/>
  </svg>
  <ul class="spec-tree">
    <li>plane</li><li>plane</li><li>plane</li>
    <li class="set">eometrical Set.1</li>
    <li class="point"><span class="node"></span>Point.1</li>
    <li class="picked"><span>ainbody</span></li>
  </ul>
</main>

<div class="bar bottom">
  <button aria-label="Open"><svg><use href="#open"/></svg></button>
  <button aria-label="Save"><svg><use href="#save"/></svg></button>
  <button aria-label="Print"><svg><use href="#print"/></svg></button>
  <button aria-label="Cut" disabled><svg><use href="#cut"/></svg></button>
  <button aria-label="Copy" disabled><svg><use href="#copy"/></svg></button>
  <button aria-label="Paste"><svg><use href="#paste"/></svg></button>
  <button class="drop" aria-label="Undo" disabled><svg><use href="#undo"/></svg></button>
  <button class="drop" aria-label="Redo" disabled><svg><use href="#redo"/></svg></button>
  <button aria-label="What's this"><svg><use href="#help"/></svg></button>
  <i class="sep"></i>
  <button aria-label="Update" disabled><svg><use href="#update"/></svg></button>
  <button aria-label="Manual update"><svg><use href="#clock"/></svg></button>
  <button aria-label="Axis system"><svg><use href="#axis3"/></svg></button>
  <button class="digits">10.1<br>10.0</button>
  <button class="drop" aria-label="Dimensions"><svg><use href="#slab"/></svg></button>
  <button aria-label="Constraint"><svg><use href="#link"/></svg></button>
  <button class="drop" aria-label="Tree order"><svg><use href="#stack"/></svg></button>
  <button aria-label="Current body"><svg><use href="#body"/></svg></button>
  <label class="pick grey body-pick"><select aria-label="In work object"><option>Mainbody</option></select></label>
  <i class="sep md"></i>
  <button aria-label="Apply material"><svg><use href="#hand"/></svg></button>
  <i class="sep"></i>
  <button aria-label="Fly mode"><svg><use href="#fly"/></svg></button>
  <button aria-label="Fit all in"><svg><use href="#fit"/></svg></button>
  <button aria-label="Pan"><svg><use href="#pan"/></svg></button>
  <button aria-label="Rotate"><svg><use href="#rotate"/></svg></button>
  <button aria-label="Zoom in"><svg><use href="#zin"/></svg></button>
  <button aria-label="Zoom out"><svg><use href="#zout"/></svg></button>
  <button aria-label="Normal view"><svg><use href="#normal"/></svg></button>
  <button aria-label="Multi view"><svg><use href="#multi"/></svg></button>
  <button class="drop" aria-label="Isometric view"><svg><use href="#iso"/></svg></button>
  <button class="drop" aria-label="Shading"><svg><use href="#cyl"/></svg></button>
  <button aria-label="Hide or show"><svg><use href="#hide"/></svg></button>
  <button aria-label="Swap visible space"><svg><use href="#swap"/></svg></button>
  <i class="sep"></i>
  <button aria-label="Catalog"><svg><use href="#tool"/></svg></button>
  <i class="sep"></i>
  <button class="tight" aria-label="Measure between"><svg><use href="#measure"/></svg></button>
  <button aria-label="Measure item"><svg><use href="#caliper"/></svg></button>
  <button class="tight" aria-label="Measure inertia"><svg><use href="#weight"/></svg></button>
</div>

<div class="status">
  <output>'Mainbody preselected</output>
  <input type="text" aria-label="Power input">
</div>

<footer class="taskbar">
  <div class="apps">
    <button aria-label="Internet Explorer"><svg viewBox="0 0 20 20"><circle cx="10" cy="10" r="6.500" fill="none" stroke="#58c1ef" stroke-width="3.500"/><path d="M5 11h12" stroke="#58c1ef" stroke-width="3"/><path d="M14 13h5" stroke="#8b9670" stroke-width="2"/><path d="M1 17Q-1 12 8 5t11-3-4 5" fill="none" stroke="#edc13e" stroke-width="1.800"/></svg></button>
    <button class="open" aria-label="Chrome"><svg viewBox="0 0 20 20"><circle cx="10" cy="10" r="9" fill="#f4cf3a"/><path d="M10 10L2 6a9 9 0 0 1 16 0z" fill="#df4938"/><path d="M10 10L2 6a9 9 0 0 0 7 13l4-7z" fill="#45a653"/><path d="M10 6h8l1 2z" fill="#df4938"/><circle cx="10" cy="10" r="4.500" fill="#f2f4f5"/><circle cx="10" cy="10" r="3.300" fill="#4283e2"/></svg></button>
    <button aria-label="File Explorer"><svg viewBox="0 0 20 20"><path d="M1 3h7l2 2h9v13H1z" fill="#e6cf83"/><path d="M3 1h7v4H3z" fill="#78bd7b"/><path d="M1 7h18v9H1z" fill="#f4e4a7"/><path d="M4 19v-7h12v7h-3v-4H7v4z" fill="#7bc9ee"/></svg></button>
    <button aria-label="Word"><svg viewBox="0 0 20 20"><path d="M10 3h9v14h-9z" fill="#f5f8fc" stroke="#285aa0"/><path d="M12 6h6M12 9h6M12 12h6M12 15h6" stroke="#285aa0"/><path d="M1 3l12-2v18L1 17z" fill="#255aa3"/><text x="3" y="13" class="word">W</text></svg></button>
    <button aria-label="SolidWorks 2017"><svg viewBox="0 0 20 20"><path d="M1 4l4-3h14v11l-3 5H1z" fill="#cb1825"/><path d="M16 4l3-3v11l-3 4z" fill="#861019"/><path d="M6 13h13v6H6z" fill="#7c1c20"/><text x="3" y="10" class="solid">SW</text><text x="6" y="19" class="year">2017</text></svg></button>
    <button aria-label="Picture viewer"><svg viewBox="0 0 20 20"><path d="M1 1h18v18H1z" fill="#b5bdc8"/><path d="M1 1h18v7l-5-2-4 3-4-3-5 4z" fill="#dbe0e5"/><path d="M1 11l5-4 5 3 5-4 3 4v4H1z" fill="#7689a3"/><path d="M1 16h18v3H1z" fill="#eef0f2"/></svg></button>
    <button aria-label="CATIA launcher"><svg viewBox="0 0 20 20"><path d="M1 1h18v18H1z" fill="#080808"/><path d="M2 3l6 5 4-6-2 8-8 3 4-4z" fill="#edf0f2"/><path d="M7 13Q11 4 16 9l2 9-4-4z" fill="#2987c5"/><path d="M11 4q7 3 7 12" stroke="#eb9f68" fill="none" stroke-width="2"/></svg></button>
    <button aria-label="Browser b"><svg viewBox="0 0 20 20"><circle cx="10" cy="10" r="8.500" fill="#239949" stroke="#d5e8dd" stroke-width="1.500"/><path d="M5 5q3-3 5-2v14q-6-1-6-7z" fill="#2a58a8"/><path d="M9 3L7 13" stroke="#17266b" stroke-width="2.500"/><circle cx="11" cy="12" r="3.300" fill="#3bcc4e" stroke="#17317a" stroke-width="2"/></svg></button>
    <button aria-label="PowerPoint"><svg viewBox="0 0 20 20"><path d="M10 3h9v14h-9z" fill="#f7ede8" stroke="#cf4827"/><circle cx="14" cy="8" r="3" fill="#d95433"/><path d="M11 13h6M11 15h6" stroke="#cf4827"/><path d="M1 3l12-2v18L1 17z" fill="#cf4325"/><text x="4" y="13" class="word">P</text></svg></button>
    <button class="open active" aria-label="CATIA"><svg viewBox="0 0 20 20"><path d="M1 1h18v18H1z" fill="#090909" stroke="#f7f7f7" stroke-width="1.500"/><path d="M2 5q9 3 10 13H8Q8 11 2 9z" fill="#3695e1"/><path d="M9 5l7-2-1 4 3 3-5 1-3-2z" fill="#f58b22"/><path d="M11 6l3 0v3z" fill="#fff4a8"/></svg></button>
    <button class="open edge" aria-label="e browser"><svg viewBox="0 0 20 20"><rect x="1" y="1" width="18" height="18" rx="5" fill="#f5fcfb"/><circle cx="10" cy="10" r="8" fill="#12958c"/><path d="M6 10h8q0-4-4-4t-4 4 4 4q2 0 4-1" fill="none" stroke="#fff" stroke-width="2.200"/></svg></button>
  </div>
  <div class="tray">
    <svg viewBox="0 0 10 10"><path d="M3 6l2-3 2 3z" fill="#fff"/></svg>
    <svg viewBox="0 0 10 10"><path d="M1 1v8" stroke="#fff"/><path d="M2 1h5v4H2z" fill="#eef"/><circle cx="7" cy="7" r="2.800" fill="#dc3d31"/><path d="M6 6l2 2M8 6L6 8" stroke="#fff"/></svg>
    <svg viewBox="0 0 10 10"><path d="M0 2h7v5H0z" fill="#777b70" stroke="#ddd"/><path d="M4 4l5 5M9 4L4 9" stroke="#cd2c2e" stroke-width="1.500"/></svg>
    <svg viewBox="0 0 10 10"><path d="M1 8h1M3 7v2M5 5v4M7 3v6M9 1v8" stroke="#dee0d7" stroke-width="1.300"/></svg>
    <svg viewBox="0 0 10 10"><path d="M1 4h2l3-3v8L3 6H1z" fill="#fff"/><path d="M8 3v4" stroke="#fff"/></svg>
    <span>ENG</span>
  </div>
</footer>
</body>
</html>
```
FILE: styles.css
```css
* { box-sizing: border-box; }

body {
  margin: 0;
  min-height: 100vh;
  display: flex;
  flex-direction: column;
  overflow: hidden;
  background: #cfcfe6;
  color: #26262c;
  font: 7px/10px "Open Sans", "Noto Sans", sans-serif;
}

button {
  margin: 0;
  padding: 0;
  border: 0;
  background: none;
  color: inherit;
  font: inherit;
}

.sprite {
  position: absolute;
  width: 0;
  height: 0;
}

.titlebar {
  position: relative;
  height: 12px;
  background: #a8bd60;
  text-align: center;
}

.title {
  margin: 0;
  font: 400 8px/12px "Noto Sans", "Open Sans", sans-serif;
  font-family: "Open Sans", sans-serif;
  color: #3c4426;
}

.minimize {
  position: absolute;
  top: 5px;
  right: 9px;
  width: 4px;
  height: 2px;
  background: #343c22;
}

.menubar {
  display: flex;
  gap: 10px;
  height: 10px;
  padding-left: 4px;
  background: #d0d0e8;
  line-height: 11px;
}

.menubar a {
  color: #34343c;
  text-decoration: none;
}

.toolbars {
  border-bottom: 2px solid #72728c;
  background: #cfcfe6;
}

.bar {
  display: flex;
  align-items: center;
  height: 19px;
  overflow: hidden;
  border-top: 2px solid #f4f4fc;
  background: linear-gradient(#dadaee, #c9c9e2);
}

.bar > * { flex-shrink: 0; }

.bar.second {
  height: 20px;
  border-top-color: #d4d4ea;
}

.second > button:first-child { margin-left: -3px; }

.bar button {
  position: relative;
  flex: none;
  width: 15px;
  height: 15px;
  display: grid;
  place-items: center;
}

.bar .tight { width: 14px; }
.bar .wide { width: 19px; }

.bar svg {
  width: 12px;
  height: 12px;
}

.drop::after {
  content: "";
  position: absolute;
  right: -1px;
  bottom: 0;
  border: 2px solid transparent;
  border-top-color: #111;
  border-bottom: 0;
}

.sep {
  width: 10px;
  height: 9px;
  background: linear-gradient(90deg, #fafaff 50%, #a4a4be 50%) center / 2px 9px no-repeat;
}

.sep.md { width: 16px; }
.sep.lg { width: 20px; }

.rule {
  width: 2px;
  height: 17px;
  background: linear-gradient(90deg, #f0f0fa 50%, #bdbdd3 50%);
}

.bar .formula {
  font: italic bold 8px/10px "Liberation Serif", serif;
}

.bar .digits {
  font: bold 5px/6px "Liberation Sans", sans-serif;
  color: #2a3770;
}

.props {
  display: flex;
  flex: 1;
  gap: 2px;
  min-width: 0;
  margin-right: -6px;
}

.pick {
  position: relative;
  flex: 33 0 0;
  min-width: 0;
  height: 12px;
  margin-top: 1px;
  background: #fff;
}

.pick.short { flex-grow: 22; }
.pick.grey { background: #e3e3e8; }
.pick.off { background: #efeff3; color: #a9a9b4; }

.pick select {
  display: block;
  width: 100%;
  height: 100%;
  padding: 0 9px 0 2px;
  border: 0;
  appearance: none;
  background: none;
  color: inherit;
  font: inherit;
  opacity: 1;
}

.pick::after {
  content: "";
  position: absolute;
  top: 4px;
  right: 3px;
  width: 3px;
  height: 3px;
  border: solid currentColor;
  border-width: 0 1px 1px 0;
  transform: rotate(45deg);
}

.pick.body-pick {
  flex: 0 0 84px;
  margin-top: 0;
}

.viewport {
  position: relative;
  flex: 1;
  min-height: 0;
  overflow: hidden;
  background: linear-gradient(#333365, #3c3c6f 38%, #46467a 62%, #77769a 80%, #a6a5ba);
}

.scene {
  position: absolute;
  width: 100%;
  height: 100%;
}

.spec-tree {
  position: absolute;
  top: 21px;
  left: 0;
  margin: 0;
  padding: 0;
  list-style: none;
  line-height: 17px;
  color: #f2f2fa;
}

.spec-tree li { padding-left: 2px; }

.spec-tree .set {
  margin-left: -3px;
  padding-left: 0;
}

.spec-tree .point {
  display: flex;
  align-items: center;
  gap: 2px;
  padding-left: 0;
}

.node {
  width: 3px;
  height: 13px;
  background: #9a9aa8;
}

.spec-tree .picked {
  margin-left: -1px;
  padding-left: 0;
  line-height: 15px;
}

.picked span {
  display: inline-block;
  background: #f7820c;
  line-height: 11px;
}

.bar.bottom {
  height: 20px;
  border-bottom: 1px solid #9292ac;
}

.bottom > button:first-child { margin-left: -10px; }

.status {
  display: flex;
  justify-content: space-between;
  height: 12px;
  padding-bottom: 2px;
  background: #d0d0e6;
  line-height: 12px;
}

.status input {
  width: 156px;
  height: 10px;
  margin-right: 1px;
  padding: 0 2px;
  border: 0;
  background: #fff;
  font: inherit;
}

.taskbar {
  display: flex;
  justify-content: space-between;
  height: 21px;
  overflow: hidden;
  background: linear-gradient(176deg, #8a946e 0 36%, #5d6c46 44% 54%, #8b9672 64%, #97a07e);
}

.apps {
  display: flex;
  gap: 1px;
  margin-left: -9px;
}

.apps button {
  width: 31px;
  height: 21px;
  display: grid;
  place-items: center;
}

.apps svg {
  width: 17px;
  height: 17px;
}

.apps .open { background: #a3ad90; }
.apps .active { background: #bcc3ae; }
.apps .edge { background: linear-gradient(90deg, #37b764, #4ccc62 70%, #a3ad90 70%); }

.word { font: bold 9px "Liberation Sans", sans-serif; fill: #fff; }
.solid { font: bold 8px "Liberation Sans", sans-serif; fill: #fff; }
.year { font: bold 6px "Liberation Sans", sans-serif; fill: #fff; }

.tray {
  display: flex;
  align-items: center;
  gap: 4px;
  padding-right: 8px;
  color: #f0f2ea;
}

.tray svg {
  width: 9px;
  height: 9px;
}
```
